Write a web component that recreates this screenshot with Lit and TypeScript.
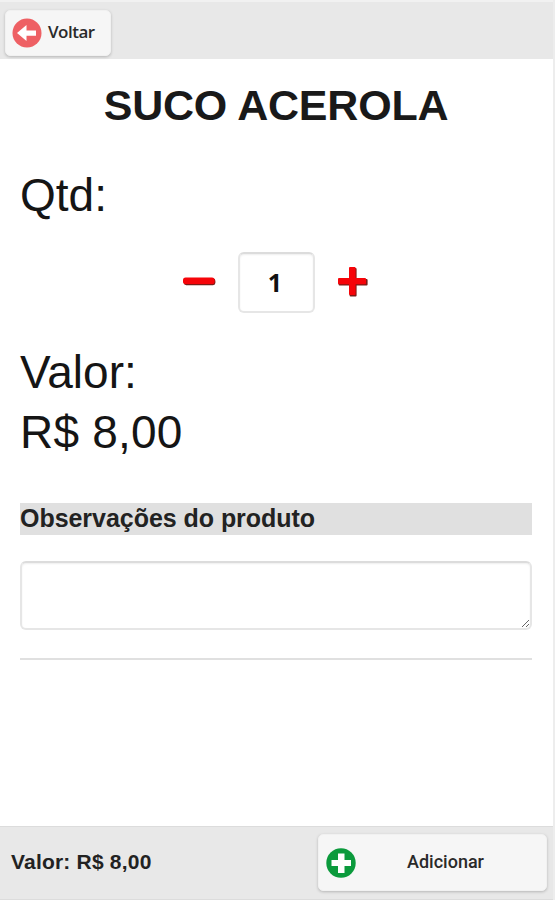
import { LitElement, html, css, svg } from "lit";
import { customElement, property } from "lit/decorators.js";

const minusIcon = svg`
  <rect x="1.8" y="3.6" width="31.6" height="6.6" rx="2.4" fill="#7d1a16"/>
  <rect x="1" y="2.4" width="31.6" height="6.6" rx="2.6" fill="#f60409"/>`;

const plusIcon = svg`
  <path d="M13 2h5v11h11v4.4H18v11h-5v-11H2V13h11z" fill="#7d1a16" stroke="#7d1a16" stroke-width="2" stroke-linejoin="round" transform="translate(.6 1)"/>
  <path d="M13 2h4.6v11H28v4.2H17.600v10.800H13V17.200H2V13h11z" fill="#f60409" stroke="#f60409" stroke-width="2" stroke-linejoin="round"/>`;

@customElement("app-root")
export class AppRoot extends LitElement {
  @property() product = "SUCO ACEROLA";
  @property({ type: Number }) quantity = 1;
  @property() price = "R$ 8,00";

  static styles = css`
    :host {
      display: flex;
      flex-direction: column;
      box-sizing: border-box;
      width: 100%;
      height: 900px;
      overflow: hidden;
      background: #fff;
      color: #191919;
      font-family: "Liberation Sans", Arial, sans-serif;
      border-right: 2px solid #ededed;
    }
    .top {
      box-sizing: border-box;
      height: 59px;
      flex: none;
      padding: 9px 5px 0;
      background: #e8e8e8;
      border-top: 2px solid #f1f1f1;
      margin-right: -2px;
    }
    button {
      box-sizing: border-box;
      display: flex;
      align-items: center;
      margin: 0;
      border: 1px solid #f1f1f1;
      border-radius: 5px;
      background: #f6f6f6;
      box-shadow: 0 1px 3px rgba(0, 0, 0, 0.22);
      color: #2a2a2a;
    }
    button svg { flex: none; }
    .back {
      width: 106px;
      height: 46px;
      margin-top: -1px;
      padding: 0 0 0 6px;
      gap: 6px;
      font: 600 17px/24px "Open Sans", sans-serif;
      letter-spacing: -0.5px;
    }
    .back span { padding-bottom: 3px; }
    main {
      flex: 1;
      padding: 0 21px 0 20px;
    }
    h1 {
      margin: 16px 0 0;
      height: 60px;
      font-size: 43px;
      line-height: 60px;
      letter-spacing: -0.22px;
      text-align: center;
    }
    .large {
      font-size: 46px;
      line-height: 60px;
      color: #151515;
    }
    .qty { margin-top: 30px; }
    .price { letter-spacing: 0.2px; }
    .stepper {
      display: flex;
      align-items: center;
      height: 61px;
      margin: 27px 0 29px 162px;
    }
    .stepper input {
      box-sizing: border-box;
      width: 77px;
      height: 61px;
      margin: 0 22px 0 21px;
      padding: 0 3px 2px 0;
      text-align: center;
      font: 700 25px "Open Sans", sans-serif;
      color: #111;
    }
    input, textarea {
      border: 2px solid #e6e6e6;
      border-top-color: #dcdcdc;
      border-radius: 6px;
      background: #fff;
      box-shadow: inset 0 1px 2px rgba(0, 0, 0, 0.07);
      outline: none;
    }
    .step { display: block; flex: none; margin-bottom: 2px; }
    h2 {
      margin: 41px 0 0;
      height: 32px;
      background: #e0e0e0;
      font-size: 25px;
      line-height: 31px;
      letter-spacing: -0.04px;
      color: #222;
    }
    textarea {
      display: block;
      box-sizing: border-box;
      width: 100%;
      height: 69px;
      margin: 26px 0 28px;
      resize: vertical;
    }
    .rule { height: 2px; background: #e0e0e0; }
    footer {
      flex: none;
      box-sizing: border-box;
      display: flex;
      justify-content: space-between;
      height: 74px;
      margin-right: -2px;
      padding: 7px 8px 0 11px;
      background: #e8e8e8;
      border-top: 1px solid #dcdcdc;
      border-bottom: 1px solid #dcdcdc;
    }
    .total {
      font-size: 21px;
      font-weight: 700;
      line-height: 56px;
      letter-spacing: 0.2px;
      color: #222;
    }
    .add {
      width: 229px;
      height: 57px;
      padding: 0 0 0 7px;
      font: 500 18px/24px Roboto, sans-serif;
    }
    .add span { flex: 1; padding: 0 11px 1px 0; text-align: center; }
  `;

  render() {
    return html`
      <header class="top">
        <button class="back">
          <svg width="30" height="30" viewBox="0 0 30 30">
            <circle cx="15" cy="15" r="14.5" fill="#ee6064"/>
            <path d="M5 15l9.500-8v5.400H24v5.400h-9.500V23z" fill="#fff"/>
          </svg>
          <span>Voltar</span>
        </button>
      </header>
      <main>
        <h1>${this.product}</h1>
        <div class="large qty">Qtd:</div>
        <div class="stepper">
          <svg class="step" width="35" height="14" viewBox="0 0 35 14">${minusIcon}</svg>
          <input .value=${String(this.quantity)} />
          <svg class="step" width="32" height="32" viewBox="0 0 32 32">${plusIcon}</svg>
        </div>
        <div class="large">Valor:</div>
        <div class="large price">${this.price}</div>
        <h2>Observações do produto</h2>
        <textarea></textarea>
        <div class="rule"></div>
      </main>
      <footer>
        <div class="total">Valor: ${this.price}</div>
        <button class="add">
          <svg width="30" height="30" viewBox="0 0 30 30">
            <circle cx="15" cy="15" r="14.7" fill="#0b9a3c"/>
            <path d="M12 5.500h6.500V12H25v6h-6.500v7H12v-7H5.500v-6H12z" fill="#fff"/>
          </svg>
          <span>Adicionar</span>
        </button>
      </footer>
    `;
  }
}
